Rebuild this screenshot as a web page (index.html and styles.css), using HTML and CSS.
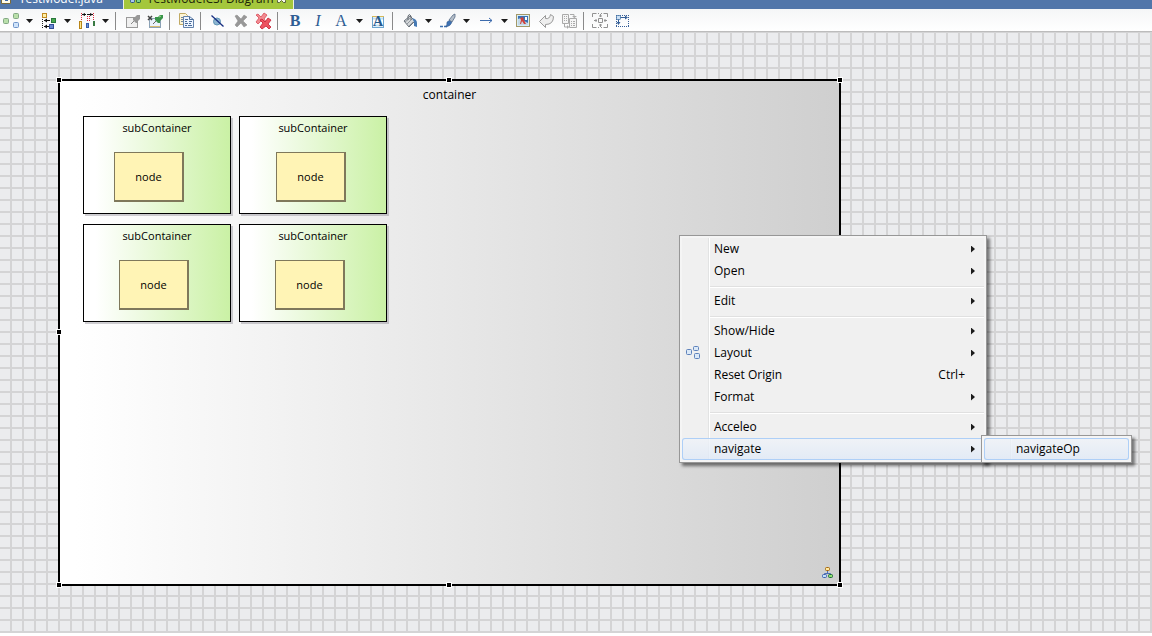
FILE: index.html
```html
<!DOCTYPE html>
<html lang="en">
<head>
<meta charset="utf-8">
<title>Diagram editor</title>
<link rel="stylesheet" href="styles.css">
</head>
<body>
<div class="tabs" role="tablist">
  <button class="tab" role="tab" aria-selected="false">
    <svg class="tab-icon" viewBox="0 3 16 16"><path d="M1.500 3.500h9v12h-9z" fill="#fffbe8" stroke="#7a6a3a"/><path d="M5 8h3v5H5z" fill="#3d68ad"/></svg>
    <span>TestModel.java</span>
  </button>
  <button class="tab tab-active" role="tab" aria-selected="true">
    <svg class="tab-icon" viewBox="0 3 16 16"><path d="M6.500 5v5M3.500 12v-2h7v2" fill="none" stroke="#3f68a8"/><rect x="1.500" y="11.500" width="4" height="3" rx="1" fill="#a8c8ee" stroke="#2b4f8c"/><rect x="7.500" y="11.500" width="4" height="3" rx="1" fill="#7fd08c" stroke="#1d5a34"/></svg>
    <span class="tab-title">TestModelCSI Diagram</span>
    <svg class="tab-close" viewBox="0 3 11 16"><path d="M1.500 5.500h2l2 2 2-2h2v2l-2 3 2 2v2h-2l-2-2-2 2h-2v-2l2-2-2-3z" fill="#f6fae8" stroke="#59643b"/></svg>
  </button>
</div>

<div class="toolbar" role="toolbar" aria-label="Diagram tools">
  <button class="tool" aria-label="Arrange all"><svg viewBox="0 0 16 16"><g stroke-width="1"><rect x=".5" y="5.500" width="5" height="5" rx="1" fill="#b9dfaa" stroke="#82a884"/><rect x="10.500" y=".5" width="5" height="5" rx="1" fill="#b9dfaa" stroke="#82a884"/><rect x="10.500" y="9.500" width="5" height="5" rx="1" fill="#cfe3fa" stroke="#6f93c8"/></g></svg></button>
  <button class="drop" aria-label="Arrange options"></button>
  <button class="tool" aria-label="Align"><svg viewBox="0 0 16 16"><rect x="1.500" y=".5" width="4" height="4" fill="#fff0a8" stroke="#c28a20"/><path d="M1.500 6v10" stroke="#222" stroke-dasharray="1 1"/><path d="M3 7.500h6M3 13.500h5" stroke="#111"/><path d="M3 7.500l3-2v4zM3 13.500l3-2v4z" fill="#111"/><rect x="10.500" y="5.500" width="4" height="4" fill="#4aa84e" stroke="#28783c"/><rect x="8.500" y="11.500" width="4" height="4" fill="#6a88d0" stroke="#344f96"/></svg></button>
  <button class="drop" aria-label="Align options"></button>
  <button class="tool" aria-label="Distribute"><svg viewBox="0 0 16 16"><path d="M2.500 0v7M8.500 3v6M10.500 3v6M14.500 0v7" stroke="#e0283c" stroke-dasharray="1 1"/><path d="M3 1.500h11" stroke="#111" stroke-dasharray="4 1"/><path d="M3 1.500L6 0v3zM14 1.500L11 0v3z" fill="#111"/><rect x=".5" y="8.500" width="2" height="7" fill="#ffe88c" stroke="#b98518"/><rect x="7.500" y="10.500" width="2" height="4" fill="#6e90d8" stroke="#355caa"/><path d="M14 8h2v5h-2z" fill="#397a43"/></svg></button>
  <button class="drop" aria-label="Distribute options"></button>
  <span class="rule"></span>
  <button class="tool" aria-label="Pin"><svg viewBox="0 0 16 16"><rect x="1.500" y="4.500" width="11" height="10" fill="#f0f0f0" stroke="#9a9a9a"/><path d="M6 11l4-4" stroke="#888"/><path d="M8 4l2 0 2-2h3v4l-2 2v2l-2 0-3-3z" fill="#989898"/></svg></button>
  <button class="tool" aria-label="Unpin"><svg viewBox="0 0 16 16"><rect x="1.500" y="5.500" width="11" height="9" fill="#e9f2fb" stroke="#8ba1b5"/><path d="M2 13.500h10" stroke="#d8bd70"/><path d="M0 3l4 4M4 3l-4 4" stroke="#444" stroke-width="1.500"/><path d="M5 11l4-4" stroke="#666"/><path d="M7 4h3l2-2h3v3l-3 3v2h-2L7 7z" fill="#39954a"/><path d="M11 4l2-1" stroke="#9ee08e"/></svg></button>
  <span class="rule"></span>
  <button class="tool" aria-label="Copy diagram"><svg viewBox="0 0 16 16"><path d="M.5.500h6l2 2v9h-8z" fill="#fdf5d6" stroke="#c1aa64"/><path d="M2 4.500h3M2 6.500h2M2 8.500h2" stroke="#72879e"/><path d="M4.500 3.500h6l4 3v8h-10z" fill="#eef5ff" stroke="#6483ac"/><path d="M10.500 3.500v3h4M6 6.500h3M6 8.500h2M10 8.500h3M6 10.500h3M10 10.500h2M6 12.500h2M9 12.500h4" fill="none" stroke="#4b6c99"/></svg></button>
  <span class="rule"></span>
  <button class="tool" aria-label="Hide element"><svg viewBox="0 0 16 16"><circle cx="7" cy="8.500" r="3.500" fill="#8cb5d0" stroke="#6195b6"/><path d="M1.500 2.500l12 11" stroke="#172f82" stroke-width="1.300"/></svg></button>
  <button class="tool" aria-label="Delete from diagram"><svg viewBox="0 0 16 16"><path d="M2 3l2-1 4 4 3-4 3 2-4 4 4 4-3 2-3-4-4 4-2-2 3-4z" fill="#989898" stroke="#888" stroke-width=".5"/></svg></button>
  <button class="tool" aria-label="Delete from model"><svg viewBox="0 0 16 16"><path d="M0 2l2-1 3 3 3-4 3 2-3 4 3 4-3 1-3-3-3 3-2-2 3-4z" fill="#f28a91" stroke="#d84b58" stroke-width=".8"/><path d="M4 7l2-1 3 3 3-4 3 2-3 4 3 3-2 2-3-3-4 3-2-2 3-4z" fill="#ed5360" stroke="#c51f35" stroke-width=".8"/></svg></button>
  <span class="rule"></span>
  <button class="tool glyph glyph-bold" aria-label="Bold">B</button>
  <button class="tool glyph glyph-italic" aria-label="Italic">I</button>
  <button class="tool glyph" aria-label="Font color">A</button>
  <button class="drop" aria-label="Font color options"></button>
  <button class="tool" aria-label="Font dialog"><svg viewBox="0 0 16 16"><rect x="1.500" y="3.500" width="11" height="11" fill="#fff" stroke="#6fa6cf"/><path d="M1 3.500h12" stroke="#d7ba58"/><path d="M2 5.500h10M2 12.500h10" stroke="#c4e0f2" stroke-width="2"/><text x="7" y="13" text-anchor="middle" class="icon-letter">A</text></svg></button>
  <span class="rule"></span>
  <button class="tool" aria-label="Fill color"><svg viewBox="0 0 16 16"><path d="M2 8l6-5 5 5-6 6z" fill="#d5d8da" stroke="#69717a"/><path d="M3 9l5-4M5 11l5-5M7 13l4-4" stroke="#9299a0"/><path d="M6 7V3q1-3 3 0v4" fill="none" stroke="#626970"/><path d="M10 5q5 1 5 5v4l-3-1V9z" fill="#477ab3"/></svg></button>
  <button class="drop" aria-label="Fill color options"></button>
  <button class="tool" aria-label="Line color"><svg viewBox="0 0 16 16"><path d="M0 13.500h3M4 13.500h3" stroke="#3f72b1" stroke-width="1.500"/><path d="M6 13q1-1 1-4l3-2 2 2q-1 4-6 5z" fill="#3e72b4" stroke="#345785" stroke-width=".5"/><path d="M9 7l4-5 2-1v3l-3 5z" fill="#b5bec8" stroke="#566b87" stroke-width=".8"/></svg></button>
  <button class="drop" aria-label="Line color options"></button>
  <button class="tool" aria-label="Line style"><svg viewBox="0 0 16 16"><path d="M2 7.500h12M11 5l3 2.500-3 2.500" fill="none" stroke="#3e6cad"/></svg></button>
  <button class="drop" aria-label="Line style options"></button>
  <button class="tool" aria-label="Workspace image"><svg viewBox="0 0 16 16"><rect x=".5" y="1.500" width="13" height="12" fill="#d7edf7" stroke="#a49968"/><rect x="2" y="3" width="10" height="9" fill="#3b72b3"/><path d="M2 12V6l3-1 3 3 4 2v2z" fill="#c5d9e6"/><path d="M4 5l3-1 1 3 2 4H8L6 8l-1 3H4l1-4z" fill="#cf403b"/><path d="M9 4h2v3H9z" fill="#fff"/></svg></button>
  <button class="tool" aria-label="Reset style"><svg viewBox="0 0 16 16"><path d="M.5 8.500l6-6v3q4 1 5-4l3 2q0 8-8 8v3z" fill="#eee" stroke="#999"/></svg></button>
  <button class="tool" aria-label="Paste layout"><svg viewBox="0 0 16 16"><path d="M.5 1.500h6v9h-6zM7.500 5.500h7v9h-7z" fill="#f5f5f5" stroke="#aaa"/><path d="M2 3.500h1M4 3.500h1M2 5.500h1M4 5.500h1M2 7.500h1M4 7.500h1M9 8.500h1M11 8.500h2M9 10.500h1M11 10.500h2M9 12.500h1M11 12.500h2M8 1.500h4v3M2.500 11v3h4" fill="none" stroke="#aaa"/><path d="M10 3h5l-2.500 2zM5 12l2 2-2 2z" fill="#aaa"/></svg></button>
  <span class="rule"></span>
  <button class="tool" aria-label="Auto size"><svg viewBox="0 0 16 16"><path d="M-.5 4V.500h4M10.500.500h4V4M-.5 11v3.500h4M10.500 14.500h4V11M5 .500h1M8 .500h1M5 14.500h1M8 14.500h1M5.500 5.500h4v4h-4zM7.500 1v3M6 3h3M7.500 11v3M6 12h3M1 7.500h3M3 6v3M11 7.500h3M12 6v3" fill="none" stroke="#929292"/></svg></button>
  <button class="tool" aria-label="Make same size"><svg viewBox="0 0 16 16"><path d="M0 2.500h13M0 13.500h13M.5 2v12M12.500 2v12" fill="none" stroke="#365e98" stroke-dasharray="1 1"/><rect x=".5" y="2.500" width="4" height="4" rx="1" fill="#cce0f5" stroke="#507dab"/><path d="M5 4.500h5M2.500 7v4" stroke="#355f98"/><path d="M12 4.500L9 2.500v4zM2.500 12l-2-3h4z" fill="#355f98"/></svg></button>
</div>

<main class="canvas">
  <section class="container">
    <h1 class="container-title">container</h1>
    <div class="sub sub-a"><h2 class="sub-title">subContainer</h2><div class="node">node</div></div>
    <div class="sub sub-b"><h2 class="sub-title">subContainer</h2><div class="node">node</div></div>
    <div class="sub sub-c"><h2 class="sub-title">subContainer</h2><div class="node">node</div></div>
    <div class="sub sub-d"><h2 class="sub-title">subContainer</h2><div class="node">node</div></div>
    <svg class="diagram-mark" viewBox="0 0 12 12"><path d="M5.500 4v2M2.500 8V6.500h6V8" fill="none" stroke="#4c6eb4"/><rect x="3.500" y=".5" width="4" height="3" rx="1" fill="#ffe9a0" stroke="#a8690c"/><rect x=".5" y="7.500" width="4" height="3" rx="1" fill="#c4e0fa" stroke="#3c60b0"/><rect x="6.500" y="7.500" width="4" height="3" rx="1" fill="#8ee070" stroke="#216b3b"/></svg>
    <i class="handle top left"></i><i class="handle top middle"></i><i class="handle top right"></i>
    <i class="handle center left"></i><i class="handle center right"></i>
    <i class="handle bottom left"></i><i class="handle bottom middle"></i><i class="handle bottom right"></i>
  </section>
</main>

<div class="menu main-menu" role="menu">
  <div class="menu-list">
    <button class="item more" role="menuitem">New</button>
    <button class="item more" role="menuitem">Open</button>
    <hr class="divider">
    <button class="item more" role="menuitem">Edit</button>
    <hr class="divider">
    <button class="item more" role="menuitem">Show/Hide</button>
    <button class="item more" role="menuitem"><svg class="item-icon" viewBox="0 0 16 16"><g fill="#dbe9f8" stroke="#5f82bb"><rect x=".5" y="4.500" width="5" height="5" rx="1"/><rect x="7.500" y="1.500" width="5" height="4" rx="1"/><rect x="8.500" y="8.500" width="5" height="5" rx="1"/></g></svg>Layout</button>
    <button class="item" role="menuitem">Reset Origin<kbd class="shortcut">Ctrl+</kbd></button>
    <button class="item more" role="menuitem">Format</button>
    <hr class="divider">
    <button class="item more" role="menuitem">Acceleo</button>
    <button class="item more hot" role="menuitem" aria-expanded="true">navigate</button>
  </div>
</div>
<div class="menu sub-menu" role="menu">
  <div class="menu-list">
    <button class="item hot" role="menuitem">navigateOp</button>
  </div>
</div>
</body>
</html>
```
FILE: styles.css
```css
* { box-sizing: border-box; }

body {
  margin: 0;
  min-height: 100vh;
  display: flex;
  flex-direction: column;
  padding-bottom: 3px;
  position: relative;
  overflow: hidden;
  background: #fff;
  color: #000;
  font: 12px/16px "Open Sans", "Noto Sans", sans-serif;
}

button {
  margin: 0;
  padding: 0;
  border: 0;
  background: none;
  color: inherit;
  font: inherit;
}

svg { display: block; overflow: visible; }

/* Editor tabs */
.tabs {
  display: flex;
  align-items: flex-end;
  height: 9px;
  overflow: hidden;
  background: #5176aa;
}

.tab {
  display: flex;
  flex: none;
  align-items: center;
  gap: 3px;
  width: 123px;
  height: 20px;
  color: #fff;
  white-space: nowrap;
}

.tab-active {
  width: 171px;
  padding-left: 5px;
  gap: 2px;
  border: solid #eef2e0;
  border-width: 0 1px;
  background: #a4c73c;
  color: #1c2408;
}

.tab-icon { flex: none; width: 16px; height: 16px; }
.tab-title { flex: 1; text-align: left; }
.tab-close { flex: none; width: 11px; height: 16px; margin-right: 7px; }

/* Toolbar */
.toolbar {
  display: flex;
  align-items: center;
  height: 23px;
  margin-left: -1px;
  padding-top: 2px;
  border-bottom: 1px solid #bcbcbc;
  background: linear-gradient(#f5f6f7, #fff);
}

.tool { flex: none; width: 23px; height: 16px; padding: 0 3px 0 4px; }
.tool svg { width: 16px; height: 16px; }

.drop { flex: none; width: 15px; height: 16px; padding-left: 4px; }
.drop::before {
  content: "";
  display: block;
  width: 7px;
  height: 4px;
  background: #1c1c1c;
  clip-path: polygon(0 0, 100% 0, 50% 100%);
}

.rule { flex: none; width: 8px; height: 18px; padding-left: 2px; }
.rule::before { content: ""; display: block; width: 1px; height: 18px; background: #8a8a8a; }

.glyph {
  color: #2f5d94;
  font: 16px/16px "Liberation Serif", serif;
  text-align: center;
}
.glyph-bold { font-weight: bold; }
.glyph-italic { font-style: italic; }
.icon-letter { font: bold 14px "Liberation Serif", serif; fill: #27598c; }

/* Diagram surface */
.canvas {
  flex: 1;
  position: relative;
  background-color: #ebecee;
  background-image:
    linear-gradient(90deg, transparent 10px, #d4d4d5 10px),
    linear-gradient(transparent 10px, #d4d4d5 10px);
  background-size: 12px 12px;
  background-position: 0 0, 0 1px;
}

.container {
  position: absolute;
  left: 58px;
  top: 47px;
  width: 783px;
  height: 507px;
  border: 2px solid #000;
  background: linear-gradient(90deg, #fff 2%, #cfcfcf);
}

.container-title {
  margin: 6px 0 0;
  font-size: 12px;
  font-weight: normal;
  line-height: 16px;
  text-align: center;
}

.sub {
  position: absolute;
  width: 148px;
  height: 98px;
  border: 1px solid #000;
  background: linear-gradient(90deg, #fff 8%, #caf1a5);
  box-shadow: 2px 2px 0 rgba(100, 95, 110, .3);
}
.sub-a { left: 23px; top: 35px; }
.sub-b { left: 179px; top: 35px; }
.sub-c { left: 23px; top: 143px; }
.sub-d { left: 179px; top: 143px; }

.sub-title {
  margin: 3px 0 0;
  font-size: 11px;
  font-weight: normal;
  line-height: 16px;
  text-align: center;
}

.node {
  position: absolute;
  left: 35px;
  top: 35px;
  width: 70px;
  height: 50px;
  border: solid #7f785b;
  border-width: 1px 2px 2px 1px;
  background: #fff4b5;
  font-size: 11px;
  line-height: 48px;
  text-align: center;
}
.sub-a .node { left: 30px; }
.sub-b .node { left: 36px; }

.diagram-mark { position: absolute; right: 5px; bottom: 5px; width: 12px; height: 12px; }

.handle {
  position: absolute;
  width: 6px;
  height: 6px;
  border: 1px solid #fff;
  background: #000;
}
.top { top: -4px; }
.center { top: 248px; }
.bottom { bottom: -4px; }
.left { left: -4px; }
.middle { left: 386px; }
.right { right: -4px; }

/* Context menus */
.menu {
  position: absolute;
  padding: 2px;
  border: 1px solid #979797;
  background: #f5f5f5;
  box-shadow: 3px 3px 3px rgba(0, 0, 0, .5);
}
.main-menu { left: 679px; top: 235px; width: 308px; }
.sub-menu { left: 981px; top: 435px; width: 151px; }

.menu-list {
  display: flex;
  flex-direction: column;
  background: linear-gradient(90deg, #f0f0f0 26px, #e2e3e3 26px, #e2e3e3 27px, #fff 27px, #fff 28px, #f0f0f0 28px);
}

.item {
  display: flex;
  align-items: center;
  position: relative;
  height: 22px;
  padding: 0 19px 0 32px;
  text-align: left;
}

.hot {
  border-radius: 3px;
  background: linear-gradient(rgba(240, 243, 248, .8), rgba(223, 233, 247, .8));
  box-shadow: inset 0 0 0 1px #aecff7;
}

.more::after {
  content: "";
  width: 4px;
  height: 7px;
  margin-left: auto;
  margin-right: -10px;
  background: #1c1c1c;
  clip-path: polygon(0 0, 100% 50%, 0 100%);
}

.item-icon { position: absolute; left: 4px; top: 3px; width: 16px; height: 16px; }
.shortcut { margin-left: auto; font: inherit; }

.divider {
  height: 2px;
  margin: 4px 0 2px 28px;
  border: 0;
  border-top: 1px solid #e0e0e0;
  background: #fff;
}
```
